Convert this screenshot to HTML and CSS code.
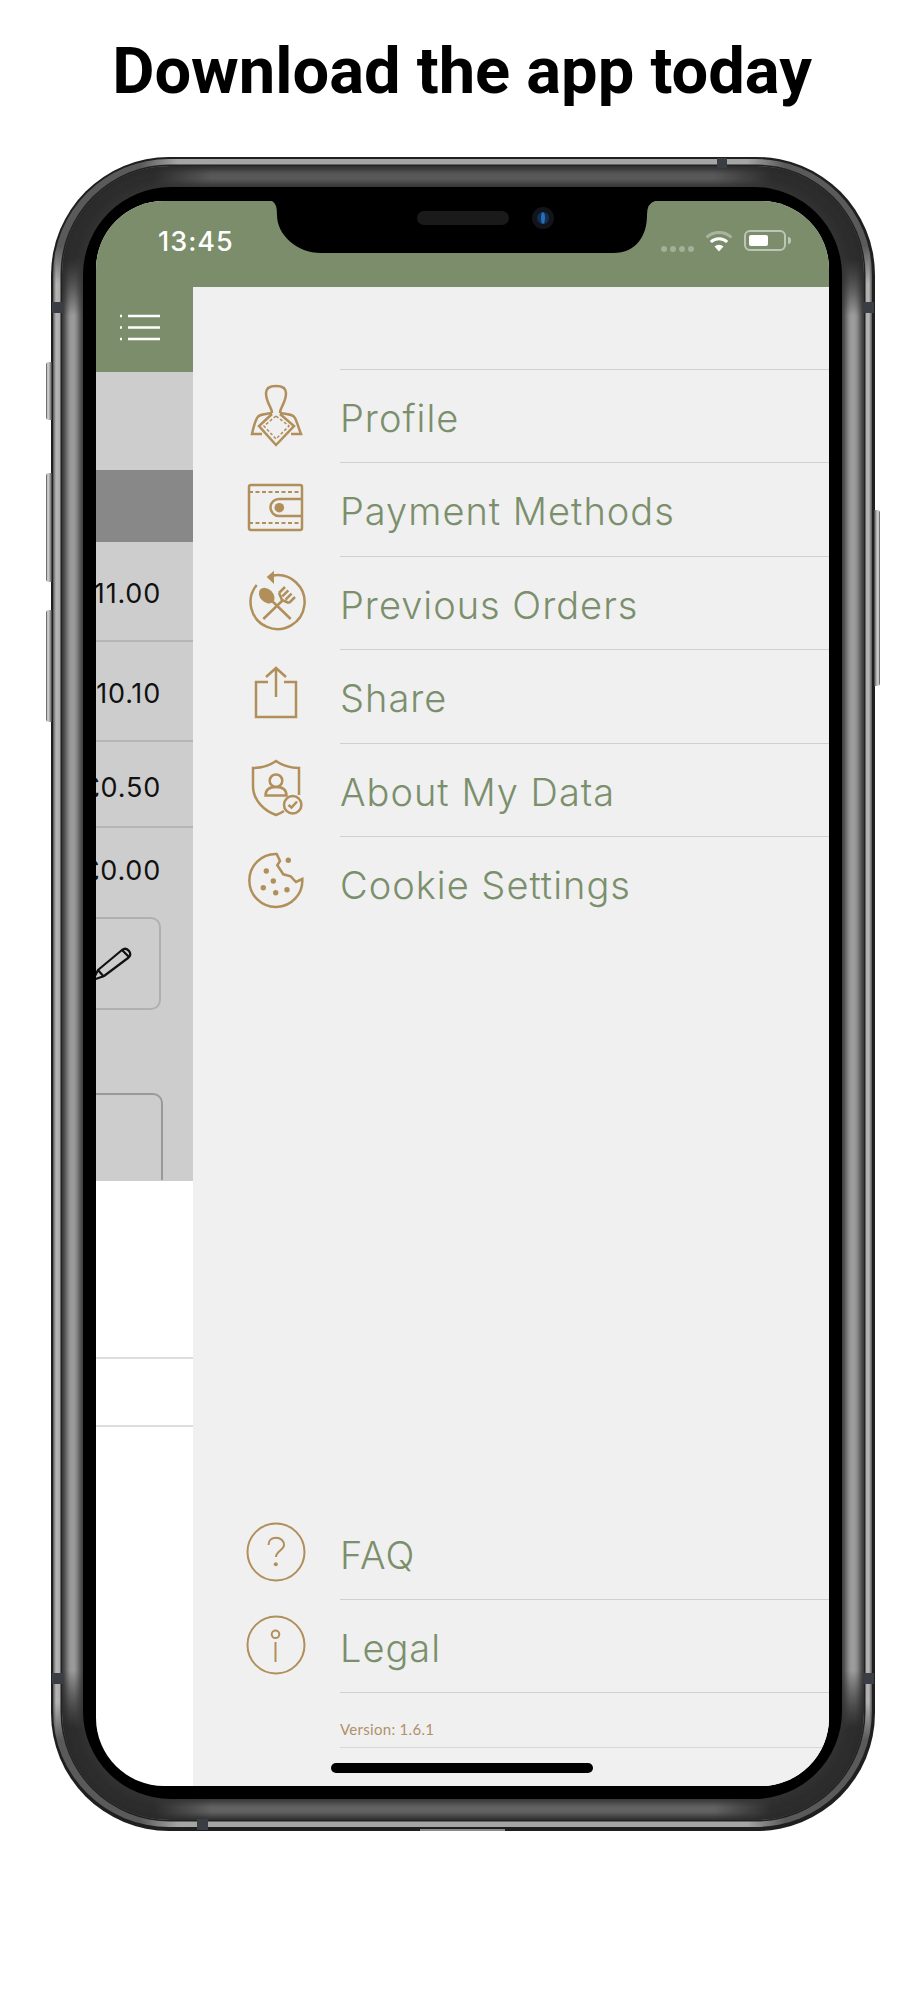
FILE: index.html
```html
<!DOCTYPE html>
<html lang="en">
<head>
    <meta charset="UTF-8">
    <title>Download the app today</title>
    <link rel="stylesheet" href="styles.css">
</head>
<body>
<h1 class="title">Download the app today</h1>
<div class="phone">
    <span class="side switch"></span>
    <span class="side vol-up"></span>
    <span class="side vol-down"></span>
    <span class="side power"></span>
    <span class="glint"></span>
    <span class="ant ant-top"></span>
    <span class="ant ant-bottom"></span>
    <span class="ant ant-lt"></span>
    <span class="ant ant-lb"></span>
    <span class="ant ant-rt"></span>
    <span class="ant ant-rb"></span>
    <div class="rim">
        <div class="band">
            <div class="bezel">
                <div class="screen">
                    <svg class="notch" width="386" height="52" viewBox="0 0 386 52">
                        <path d="M0 0H3Q8 2 8 14C8 34 28 52 52 52H344C368 52 378 34 378 14Q378 2 386 0Z" fill="#000"/>
                    </svg>
                    <span class="speaker"></span>
                    <span class="camera"><i></i></span>
                    <div class="status">
                        <span class="time">13:45</span>
                        <div class="status-icons">
                            <div class="signal"><i></i><i></i><i></i><i></i></div>
                            <svg width="28" height="22" viewBox="0 0 28 22">
                                <path d="M1.5 7.5A18 18 0 0 1 26.5 7.5" fill="none" stroke="#fff" stroke-opacity=".35" stroke-width="3"/>
                                <path d="M5.8 12A12 12 0 0 1 22.2 12" fill="none" stroke="#fff" stroke-width="3"/>
                                <path d="M14 21.500L9.500 16.500A6.500 6.500 0 0 1 18.500 16.500Z" fill="#fff"/>
                            </svg>
                            <div class="battery"><i></i></div>
                        </div>
                    </div>
                    <div class="content">
                        <div class="behind">
                            <div class="menu-bar">
                                <svg width="44" height="28" viewBox="0 0 44 28">
                                    <path d="M3 3H5M11 3H43M3 14.500H5M11 14.500H43M3 26H5M11 26H43" stroke="#fff" stroke-width="2.500" fill="none"/>
                                </svg>
                            </div>
                            <div class="dim">
                                <div class="dim-head"></div>
                                <div class="dim-bar"></div>
                                <div class="amount a1">£11.00</div>
                                <div class="amount a2">£10.10</div>
                                <div class="amount a3">£0.50</div>
                                <div class="amount a4">£0.00</div>
                                <div class="edit-btn">
                                    <svg width="42" height="38" viewBox="0 0 42 38">
                                        <path d="M2 35L7 25L31 5Q35 2 38 6Q41 10 37 13L13 31Z M7 25L13 32 M31 5L38 12 M2 35L4 30" fill="none" stroke="#111" stroke-width="2.200" stroke-linejoin="round"/>
                                    </svg>
                                </div>
                                <div class="dim-box"></div>
                            </div>
                            <div class="white-row tall"></div>
                            <div class="white-row"></div>
                        </div>
                        <div class="panel">
                            <ul class="list">
                                <li class="row">
                                    <svg class="ico" viewBox="0 0 70 70">
                                        <path d="M31 34C31 28 25 24 25 14C25 9 29 7 35 7C41 7 45 9 45 14C45 24 39 28 39 34"/>
                                        <path d="M31 34C24 35 18 35 16 39C14 43 12 50 11 55H21M39 34C46 35 52 35 54 39C56 43 58 50 60 55H50"/>
                                        <path d="M31 35L18 47L35 66L53 47L39 35"/>
                                        <path d="M35 37L23 47L35 60L48 47Z" stroke-width="1.500" stroke-dasharray="3 2"/>
                                    </svg>
                                    <span class="label">Profile</span>
                                </li>
                                <li class="row">
                                    <svg class="ico" viewBox="0 0 70 70">
                                        <rect x="8" y="13" width="53" height="45" rx="2"/>
                                        <path d="M8 20H61M8 51H61" stroke-width="1.800" stroke-dasharray="4 2.500"/>
                                        <path d="M61 27H38A8.500 8.500 0 0 0 38 44H61"/>
                                        <circle class="solid" cx="38.300" cy="35.700" r="4.800"/>
                                    </svg>
                                    <span class="label">Payment Methods</span>
                                </li>
                                <li class="row">
                                    <svg class="ico" viewBox="0 0 70 70">
                                        <path d="M15.700 19A27 27 0 1 0 32 9.500"/>
                                        <path class="solid" d="M25.700 11L33 4.700V18Z"/>
                                        <ellipse class="solid" cx="25.700" cy="29.700" rx="9" ry="6.500" transform="rotate(45 25.700 29.700)"/>
                                        <path d="M28 32L49.700 53M22.300 53L42 34"/>
                                        <path d="M38 27L44 21M41.300 30.300L47.300 24.300M44.600 33.600L50.600 27.600M48 37L54 31M38 27L41 34L48 37"/>
                                    </svg>
                                    <span class="label">Previous Orders</span>
                                </li>
                                <li class="row">
                                    <svg class="ico" viewBox="0 0 70 70">
                                        <path d="M27 23H15V58H55V23H43"/>
                                        <path d="M35 38V9M25 18L35 9L45 18"/>
                                    </svg>
                                    <span class="label">Share</span>
                                </li>
                                <li class="row">
                                    <svg class="ico" viewBox="0 0 70 70">
                                        <path d="M43 58C40 60 38 61 35 62C24 58 12 48 12 33V15C19 15 28 13 35 8C42 13 51 15 58 15V42"/>
                                        <circle cx="35" cy="27.700" r="6.300"/>
                                        <path d="M24.500 42.500C24.500 36 29 34 35 34C41 34 45.500 36 45.500 42.500Z"/>
                                        <circle cx="51.700" cy="51.700" r="8.700"/>
                                        <path d="M47.500 52L50.500 54.500L56 48.500"/>
                                    </svg>
                                    <span class="label">About My Data</span>
                                </li>
                                <li class="row">
                                    <svg class="ico" viewBox="0 0 70 70">
                                        <path d="M35.700 8A26.500 26.500 0 1 0 61.300 33L55 36L49.700 30.300L42.300 28.300L36.300 19.300L39 15Z"/>
                                        <circle class="solid" cx="47.300" cy="14.300" r="2.700"/>
                                        <circle class="solid" cx="25.300" cy="25" r="2.700"/>
                                        <circle class="solid" cx="32.300" cy="35" r="2.700"/>
                                        <circle class="solid" cx="22.300" cy="41.700" r="2.700"/>
                                        <circle class="solid" cx="34.700" cy="46.700" r="2.700"/>
                                        <circle class="solid" cx="46" cy="43.700" r="2.700"/>
                                    </svg>
                                    <span class="label">Cookie Settings</span>
                                </li>
                            </ul>
                            <ul class="list foot">
                                <li class="row">
                                    <svg class="ico thin" viewBox="0 0 70 70">
                                        <circle cx="35" cy="35" r="28.500"/>
                                        <path d="M27.500 28C27.500 23 31 20.700 35 20.700C39.500 20.700 43 24 43 28C43 33 35 34 35 40"/>
                                        <circle class="solid" cx="34.800" cy="47.300" r="2"/>
                                    </svg>
                                    <span class="label">FAQ</span>
                                </li>
                                <li class="row">
                                    <svg class="ico thin" viewBox="0 0 70 70">
                                        <circle cx="35" cy="35" r="28.500"/>
                                        <circle cx="34.500" cy="24.300" r="3.800"/>
                                        <path d="M34.500 32V52"/>
                                    </svg>
                                    <span class="label">Legal</span>
                                </li>
                                <li class="row version-row">
                                    <span></span>
                                    <span class="version">Version: 1.6.1</span>
                                </li>
                            </ul>
                        </div>
                    </div>
                    <span class="home"></span>
                </div>
            </div>
        </div>
    </div>
</div>
</body>
</html>
```

FILE: styles.css
```css
*{
    margin: 0;
    padding: 0;
    box-sizing: border-box;
}
body{
    background: #fff;
    font-family: "Inter", "Liberation Sans", sans-serif;
}
.title{
    font-family: "Roboto", "Liberation Sans", sans-serif;
    font-size: 65px;
    font-weight: 700;
    line-height: 75px;
    text-align: center;
    padding-top: 34px;
    height: 157px;
    color: #000;
}

/* phone frame */
.phone{
    position: relative;
    width: 824px;
    height: 1674px;
    margin-left: 51px;
    padding: 2px 3px 4px 2px;
    background: #1f1f1f;
    border-radius: 118px;
}
.rim{
    height: 100%;
    padding: 7px 8px 7px 9px;
    border-radius: 116px;
    background:
        radial-gradient(circle 125px at 0 0, #5a5a5a 70%, transparent),
        radial-gradient(circle 125px at 100% 0, #5a5a5a 70%, transparent),
        radial-gradient(circle 125px at 0 100%, #5a5a5a 70%, transparent),
        radial-gradient(circle 125px at 100% 100%, #5a5a5a 70%, transparent),
        linear-gradient(90deg, #555 0, #b5b5b5 3px, #a5a5a5 9px, #a5a5a5 calc(100% - 9px), #b5b5b5 calc(100% - 3px), #555 100%);
}
.band{
    height: 100%;
    padding: 21px 22px 21px 21px;
    border-radius: 108px;
    background:
        radial-gradient(circle 150px at 0 0, #2e2e2e 62%, transparent),
        radial-gradient(circle 150px at 100% 0, #2e2e2e 62%, transparent),
        radial-gradient(circle 150px at 0 100%, #2e2e2e 62%, transparent),
        radial-gradient(circle 150px at 100% 100%, #2e2e2e 62%, transparent),
        linear-gradient(180deg, #5c5c5c 0, #5c5c5c 70px, #a0a0a0 150px, #a0a0a0 calc(100% - 150px), #666 calc(100% - 70px), #666 100%);
    box-shadow: 0 0 0 1.500px #222, inset 0 0 6px 4px #2a2a2a;
}
.bezel{
    height: 100%;
    padding: 14px 13px 13px 13px;
    background: #000;
    border-radius: 88px;
    box-shadow: 0 0 6px 4px #333;
}
.screen{
    position: relative;
    height: 100%;
    display: flex;
    flex-direction: column;
    overflow: hidden;
    border-radius: 68px;
    background: #fff;
}
.side{
    position: absolute;
    left: -5px;
    width: 6px;
    background: linear-gradient(90deg, #444, #ddd 30%, #999 70%, #333);
    border-radius: 3px 0 0 3px;
}
.switch{
    top: 205px;
    height: 58px;
}
.vol-up{
    top: 316px;
    height: 109px;
}
.vol-down{
    top: 453px;
    height: 112px;
}
.power{
    left: auto;
    right: -5px;
    top: 353px;
    height: 176px;
    border-radius: 0 3px 3px 0;
    background: linear-gradient(90deg, #333, #999 30%, #ddd 70%, #444);
}
.glint{
    position: absolute;
    left: 369px;
    bottom: 0;
    width: 85px;
    height: 2px;
    background: #8a8a8a;
}
.ant{
    position: absolute;
    background: #3a3e44;
}
.ant-top{
    left: 666px;
    top: 1px;
    width: 10px;
    height: 10px;
}
.ant-bottom{
    left: 146px;
    bottom: 1px;
    width: 11px;
    height: 11px;
}
.ant-lt, .ant-lb, .ant-rt, .ant-rb{
    width: 11px;
    height: 11px;
}
.ant-lt{
    left: 1px;
    top: 145px;
}
.ant-lb{
    left: 1px;
    top: 1516px;
}
.ant-rt{
    right: 1px;
    top: 145px;
}
.ant-rb{
    right: 1px;
    top: 1516px;
}

/* notch */
.notch{
    position: absolute;
    left: 173px;
    top: 0;
}
.speaker{
    position: absolute;
    left: 321px;
    top: 10px;
    width: 92px;
    height: 14px;
    border-radius: 7px;
    background: #1a1a1a;
}
.camera{
    position: absolute;
    left: 436px;
    top: 6px;
    width: 22px;
    height: 22px;
    border-radius: 50%;
    background: #11151a;
    display: flex;
    align-items: center;
    justify-content: center;
}
.camera i{
    width: 12px;
    height: 12px;
    border-radius: 50%;
    background: #2a6fb5;
    border-left: 4px solid #103058;
    border-right: 4px solid #103058;
}
.home{
    position: absolute;
    left: 235px;
    bottom: 13px;
    width: 262px;
    height: 10px;
    border-radius: 5px;
    background: #000;
}

/* status bar */
.status{
    height: 86px;
    flex-shrink: 0;
    display: flex;
    justify-content: space-between;
    align-items: flex-start;
    padding: 26px 43px 0 62px;
    background: #7b8d6b;
    color: #fff;
}
.time{
    font-size: 27px;
    font-weight: 500;
    line-height: 30px;
    letter-spacing: 1px;
}
.status-icons{
    display: flex;
    align-items: flex-start;
    gap: 11px;
    padding-top: 3px;
}
.signal{
    display: flex;
    gap: 3px;
    padding-top: 16px;
}
.signal i{
    width: 6px;
    height: 6px;
    border-radius: 50%;
    background: rgba(255,255,255,0.3);
}
.battery{
    position: relative;
    width: 42px;
    height: 21px;
    padding: 3px;
    border: 2px solid rgba(255,255,255,0.5);
    border-radius: 6px;
}
.battery i{
    display: block;
    width: 19px;
    height: 100%;
    background: #fff;
    border-radius: 2px;
}
.battery::after{
    content: "";
    position: absolute;
    right: -7px;
    top: 5px;
    width: 3px;
    height: 7px;
    background: rgba(255,255,255,0.5);
    border-radius: 0 3px 3px 0;
}

/* page behind the drawer */
.content{
    flex: 1;
    display: flex;
    min-height: 0;
}
.behind{
    width: 97px;
    flex-shrink: 0;
}
.menu-bar{
    height: 85px;
    background: #7b8d6b;
    padding: 26px 0 0 21px;
}
.dim{
    height: 809px;
    background: #cdcdcd;
}
.dim-head{
    height: 98px;
}
.dim-bar{
    height: 72px;
    background: #888;
}
.amount{
    display: flex;
    justify-content: flex-end;
    align-items: center;
    padding: 4px 32px 0 0;
    font-size: 27px;
    font-weight: 400;
    letter-spacing: 0.800px;
    color: #111;
    white-space: nowrap;
    border-bottom: 2px solid #b5b5b5;
}
.a1, .a2{
    height: 100px;
}
.a3{
    height: 86px;
    padding-top: 6px;
}
.a4{
    height: 80px;
    padding-top: 4px;
    border-bottom: 0;
}
.edit-btn{
    height: 93px;
    margin: 9px 32px 0 -40px;
    padding-right: 26px;
    display: flex;
    justify-content: flex-end;
    align-items: center;
    border: 2px solid #b0b0b0;
    border-radius: 10px;
}
.dim-box{
    height: 87px;
    margin: 83px 30px 0 -40px;
    border: 2px solid #999;
    border-bottom: 0;
    border-radius: 10px 10px 0 0;
}
.white-row{
    height: 68px;
    border-bottom: 2px solid #ddd;
}
.white-row.tall{
    height: 178px;
}

/* drawer */
.panel{
    flex: 1;
    display: flex;
    flex-direction: column;
    justify-content: space-between;
    background: #f0f0f0;
    padding-top: 81.500px;
}
.list{
    list-style: none;
}
.row{
    display: flex;
    height: 93.600px;
}
.ico{
    width: 70px;
    height: 70px;
    margin: 10px 29px 0 48px;
    flex-shrink: 0;
    fill: none;
    stroke: #b08f5a;
    stroke-width: 2.500;
}
.ico .solid{
    fill: #b08f5a;
    stroke: none;
}
.ico.thin{
    stroke-width: 2;
}
.label{
    flex: 1;
    padding-top: 23px;
    line-height: 50px;
    font-size: 38px;
    font-weight: 300;
    letter-spacing: 1px;
    color: #7b8f6c;
    border-top: 1px solid #d0d0d0;
}
.foot{
    padding-bottom: 38px;
}
.foot .row{
    height: 93px;
}
.foot .label{
    border-top: 0;
    border-bottom: 1px solid #d0d0d0;
}
.foot .version-row{
    height: 55px;
}
.version-row span:first-child{
    width: 147px;
}
.version{
    flex: 1;
    font-family: "Lato", "Liberation Sans", sans-serif;
    font-size: 15px;
    letter-spacing: 0.300px;
    line-height: 72px;
    height: 55px;
    color: #b0906a;
    border-bottom: 1px solid #d8d8d8;
}
```
